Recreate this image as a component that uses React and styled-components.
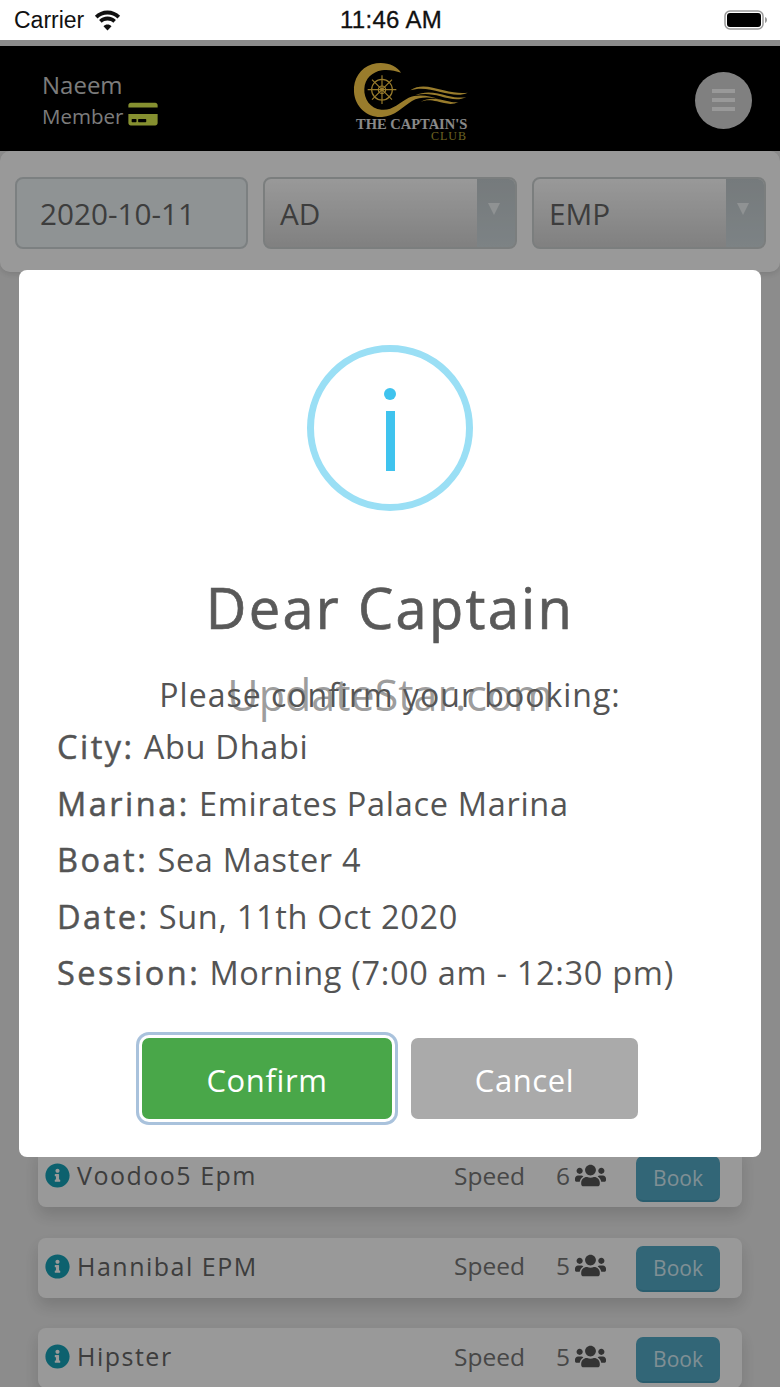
import styled, { createGlobalStyle } from "styled-components";
import { FaCreditCard, FaInfoCircle, FaUsers } from "react-icons/fa";

const GlobalStyle = createGlobalStyle`
  html, body {
    margin: 0;
    padding: 0;
    background: #fff;
  }

  body {
    font-family: "Open Sans", "Liberation Sans", sans-serif;
    overflow: hidden;
  }
`;

const Phone = styled.div`
  width: 780px;
  height: 1387px;
  display: flex;
  flex-direction: column;
  overflow: hidden;
`;

const StatusBar = styled.div`
  height: 40px;
  flex: none;
  display: grid;
  grid-template-columns: 1fr auto 1fr;
  align-items: center;
  padding: 0 12px 0 14px;
  background: #fff;
  color: #111;
  font-family: "Liberation Sans", sans-serif;
  font-size: 23px;
`;

const Carrier = styled.div`
  display: flex;
  align-items: center;
  gap: 9px;
`;

const Clock = styled.div`
  font-size: 24px;
  font-weight: 500;
  letter-spacing: 0.3px;
  -webkit-text-stroke: 0.3px #111;
`;

const Battery = styled.svg`
  justify-self: end;
`;

const Screen = styled.div`
  position: relative;
  flex: 1;
  min-height: 0;
  padding-top: 6px;
  background: #eaeaea;
  overflow: hidden;
`;

const Overlay = styled.div`
  position: absolute;
  inset: 0;
  background: rgba(0, 0, 0, 0.4);
`;

const Header = styled.header`
  height: 105px;
  display: grid;
  grid-template-columns: 347px 130px 1fr;
  align-items: center;
  background: #000;
`;

const User = styled.div`
  padding: 2px 0 0 42px;
  color: #cfcfcf;
`;

const UserName = styled.div`
  font-size: 24px;
  line-height: 32px;
`;

const UserRole = styled.div`
  display: flex;
  align-items: center;
  gap: 5px;
  margin-top: 1px;
  font-size: 20.5px;
  line-height: 28px;
`;

const CardIcon = styled(FaCreditCard)`
  width: 30px;
  height: 26px;
  margin-top: -4px;
  color: #e0f050;
`;

const LogoBox = styled.div`
  height: 105px;
  position: relative;
`;

const LogoMark = styled.svg`
  display: block;
  margin-top: 11px;
`;

const LogoTitle = styled.div`
  position: absolute;
  left: 9px;
  top: 71.5px;
  font-family: "Liberation Serif", serif;
  font-size: 14.5px;
  font-weight: 700;
  line-height: 13px;
  white-space: nowrap;
  color: #e4e4e4;
`;

const LogoSub = styled.div`
  position: absolute;
  left: 84px;
  top: 85px;
  font-family: "Liberation Serif", serif;
  font-size: 12px;
  line-height: 11px;
  letter-spacing: 1px;
  color: #b5a63a;
`;

const MenuButton = styled.div`
  justify-self: end;
  width: 57px;
  height: 57px;
  margin: 3px 28px 0 0;
  border-radius: 50%;
  background: #d6d6d6;
  display: flex;
  flex-direction: column;
  justify-content: center;
  align-items: center;
  gap: 5px;
`;

const MenuBar = styled.span`
  width: 23px;
  height: 4px;
  background: #fff;
`;

const Filters = styled.div`
  height: 121px;
  box-sizing: border-box;
  display: grid;
  grid-template-columns: 233px 254px 234px;
  column-gap: 15px;
  padding: 26px 15px 0;
  background: #fff;
  border-radius: 10px;
  box-shadow: 0 2px 6px rgba(0, 0, 0, 0.12);
`;

const DateField = styled.div`
  height: 72px;
  box-sizing: border-box;
  display: flex;
  align-items: center;
  padding-left: 23px;
  border: 2px solid #cfd6d8;
  border-radius: 8px;
  background: #eef5f7;
  color: #666;
  font-size: 29.7px;
`;

const SelectField = styled.div`
  height: 72px;
  box-sizing: border-box;
  display: grid;
  grid-template-columns: 1fr 38px;
  align-items: center;
  border: 2px solid #cdd2d3;
  border-radius: 8px;
  overflow: hidden;
  background: linear-gradient(#ffffff, #d6d6d6);
  color: #666;
  font-size: 29.7px;
`;

const SelectText = styled.div`
  padding-left: 15px;
`;

const SelectArrow = styled.div`
  height: 100%;
  display: flex;
  justify-content: flex-start;
  padding: 24px 0 0 11px;
  box-sizing: border-box;
  background: linear-gradient(#c4cccf, #d0dade);

  &::after {
    content: "";
    width: 0;
    height: 0;
    border-left: 6px solid transparent;
    border-right: 6px solid transparent;
    border-top: 12px solid #eef3f5;
  }
`;

// the rows above these sit hidden behind the dialog
const BoatList = styled.div`
  display: flex;
  flex-direction: column;
  gap: 30.5px;
  padding: 875px 38px 0;
`;

const BoatRow = styled.div`
  height: 60px;
  flex: none;
  display: grid;
  grid-template-columns: 24px 370px 95px 73px 84px;
  column-gap: 7px;
  align-items: center;
  padding: 0 22px 0 8px;
  border-radius: 8px;
  background: #ffffff;
  box-shadow: 0 8px 16px rgba(0, 0, 0, 0.14);
`;

const InfoIcon = styled(FaInfoCircle)`
  width: 25px;
  height: 25px;
  margin: 0 0 3px -1px;
  color: #17a2b8;
`;

const BoatName = styled.div`
  margin-bottom: 4px;
  font-size: 25px;
  letter-spacing: 1.5px;
  color: #666;
  white-space: nowrap;
`;

const BoatType = styled.div`
  margin-bottom: 4px;
  font-size: 24.5px;
  color: #777;
`;

const Seats = styled.div`
  display: flex;
  align-items: center;
  gap: 5px;
  margin-bottom: 4px;
  font-size: 24.5px;
  color: #777;
`;

const SeatsIcon = styled(FaUsers)`
  width: 31px;
  height: 25px;
  color: #555;
`;

const BookButton = styled.div`
  height: 46px;
  margin-top: 3px;
  display: flex;
  align-items: center;
  justify-content: center;
  border-radius: 7px;
  background: #54aac6;
  border-bottom: 2px solid #469cb8;
  box-sizing: border-box;
  color: #d5eef7;
  font-size: 21px;
`;

const Dialog = styled.div`
  position: absolute;
  left: 19px;
  top: 230px;
  width: 742px;
  height: 887px;
  box-sizing: border-box;
  padding-top: 75px;
  border-radius: 8px;
  background: #fff;
  color: #545454;
`;

const InfoRing = styled.div`
  width: 166px;
  height: 166px;
  box-sizing: border-box;
  margin: 0 auto;
  border: 7px solid #9adff5;
  border-radius: 50%;
  display: flex;
  flex-direction: column;
  align-items: center;
  gap: 11px;
  padding-top: 36px;
`;

const InfoDot = styled.span`
  width: 12px;
  height: 12px;
  border-radius: 50%;
  background: #3fc3ee;
`;

const InfoStem = styled.span`
  width: 9px;
  height: 60px;
  background: #3fc3ee;
`;

const Title = styled.h2`
  margin: 58px 0 0;
  text-align: center;
  font-size: 56px;
  line-height: 76px;
  font-weight: 400;
  letter-spacing: 2.3px;
  -webkit-text-stroke: 0.7px #595959;
  color: #595959;
`;

const Lead = styled.div`
  position: relative;
  margin-top: 28px;
  text-align: center;
  font-size: 32px;
  line-height: 44px;
  letter-spacing: 1px;
`;

const Watermark = styled.div`
  position: absolute;
  left: 0;
  right: 0;
  top: -4px;
  text-align: center;
  font-size: 43px;
  line-height: 52px;
  letter-spacing: 0;
  color: rgba(90, 90, 90, 0.6);
  white-space: nowrap;
`;

const Details = styled.div`
  margin-top: 2px;
  padding-left: 38px;
`;

const DetailLine = styled.div`
  font-size: 32.5px;
  line-height: 56.5px;
  letter-spacing: 0.7px;
  white-space: nowrap;
`;

const DetailLabel = styled.span`
  letter-spacing: 2.5px;
  -webkit-text-stroke: 0.5px #545454;
`;

const Actions = styled.div`
  margin-top: 36px;
  padding-left: 123px;
  display: flex;
  gap: 19px;
`;

const ActionButton = styled.div`
  width: ${(props) => props.$width}px;
  height: 81px;
  box-sizing: border-box;
  padding-top: 3px;
  display: flex;
  align-items: center;
  justify-content: center;
  border-radius: 7px;
  background: ${(props) => props.$color};
  color: #fff;
  font-size: 31px;
  letter-spacing: 0.6px;
  box-shadow: ${(props) => (props.$focused ? "0 0 0 3px #fff, 0 0 0 6px #a9c2dc" : "none")};
`;

const boats = [
  { name: "Voodoo5 Epm", seats: 6 },
  { name: "Hannibal EPM", seats: 5 },
  { name: "Hipster", seats: 5 },
];

const details = [
  ["City:", "Abu Dhabi"],
  ["Marina:", "Emirates Palace Marina"],
  ["Boat:", "Sea Master 4"],
  ["Date:", "Sun, 11th Oct 2020"],
  ["Session:", "Morning (7:00 am - 12:30 pm)"],
];

function WifiIcon() {
  return (
    <svg width="29" height="21" viewBox="0 0 28 21">
      <path d="M14 4.500c3.900 0 7.400 1.500 10 4l2.600-2.800C23.300 2.500 18.900.5 14 .5S4.700 2.500 1.400 5.700L4 8.500c2.600-2.500 6.100-4 10-4z" fill="#111" />
      <path d="M14 10.500c2.300 0 4.300.9 5.800 2.300l2.600-2.800C20.200 7.900 17.300 6.600 14 6.600S7.800 7.900 5.600 10l2.600 2.800c1.500-1.400 3.500-2.300 5.800-2.300z" fill="#111" />
      <path d="M14 20.500l4-4.300c-1-1-2.400-1.600-4-1.600s-3 .6-4 1.600z" fill="#111" />
    </svg>
  );
}

function BatteryIcon() {
  return (
    <Battery width="44" height="20" viewBox="0 0 44 20">
      <rect x="1" y="1" width="38" height="18" rx="5" fill="none" stroke="#999" strokeWidth="1.500" />
      <rect x="3" y="3" width="34" height="14" rx="3" fill="#000" />
      <path d="M41 7v6c1.200-.4 2-1.600 2-3s-.8-2.600-2-3z" fill="#999" />
    </Battery>
  );
}

function Logo() {
  return (
    <LogoMark width="127" height="62" viewBox="200 50 381 186">
      <g fill="#ffcf4a">
        <path d="M362 97C350 75 310 60 275 72C240 82 218 118 221 155C224 200 262 233 305 230C345 228 365 200 395 182C420 168 455 170 480 178C450 165 410 160 385 172C355 188 335 212 303 208C270 205 250 175 252 145C254 115 275 95 305 90C325 87 345 92 362 97Z" />
        <path d="M390 150C420 130 450 140 490 150C520 158 545 160 562 157C540 168 510 162 480 155C450 147 420 140 390 150Z" />
        <path d="M405 165C435 150 470 158 500 166C525 172 545 173 558 170C535 182 510 176 480 168C455 161 430 158 405 165Z" />
        <path d="M420 185C445 170 475 175 500 182C515 186 525 187 535 185C515 195 495 190 470 183C450 178 435 178 420 185Z" />
      </g>
      <g fill="none" stroke="#ffcf4a" strokeWidth="3.500">
        <circle cx="305" cy="148" r="31" />
        <circle cx="305" cy="148" r="11" />
        <path d="M305 105v86M262 148h86M275 118l60 60M335 118l-60 60" />
      </g>
    </LogoMark>
  );
}

function App() {
  return (
    <Phone>
      <GlobalStyle />
      <StatusBar>
        <Carrier>
          Carrier
          <WifiIcon />
        </Carrier>
        <Clock>11:46 AM</Clock>
        <BatteryIcon />
      </StatusBar>

      <Screen>
        <Header>
          <User>
            <UserName>Naeem</UserName>
            <UserRole>
              Member
              <CardIcon />
            </UserRole>
          </User>
          <LogoBox>
            <Logo />
            <LogoTitle>THE CAPTAIN'S</LogoTitle>
            <LogoSub>CLUB</LogoSub>
          </LogoBox>
          <MenuButton>
            <MenuBar />
            <MenuBar />
            <MenuBar />
          </MenuButton>
        </Header>

        <Filters>
          <DateField>2020-10-11</DateField>
          <SelectField>
            <SelectText>AD</SelectText>
            <SelectArrow />
          </SelectField>
          <SelectField>
            <SelectText>EMP</SelectText>
            <SelectArrow />
          </SelectField>
        </Filters>

        <BoatList>
          {boats.map((boat) => (
            <BoatRow key={boat.name}>
              <InfoIcon />
              <BoatName>{boat.name}</BoatName>
              <BoatType>Speed</BoatType>
              <Seats>
                {boat.seats}
                <SeatsIcon />
              </Seats>
              <BookButton>Book</BookButton>
            </BoatRow>
          ))}
        </BoatList>

        <Overlay />

        <Dialog>
          <InfoRing>
            <InfoDot />
            <InfoStem />
          </InfoRing>
          <Title>Dear Captain</Title>
          <Lead>
            Please confirm your booking:
            <Watermark>UpdateStar.com</Watermark>
          </Lead>
          <Details>
            {details.map(([label, value]) => (
              <DetailLine key={label}>
                <DetailLabel>{label}</DetailLabel> {value}
              </DetailLine>
            ))}
          </Details>
          <Actions>
            <ActionButton $width={250} $color="#49a749" $focused>Confirm</ActionButton>
            <ActionButton $width={227} $color="#aaaaaa">Cancel</ActionButton>
          </Actions>
        </Dialog>
      </Screen>
    </Phone>
  );
}

export default App;
